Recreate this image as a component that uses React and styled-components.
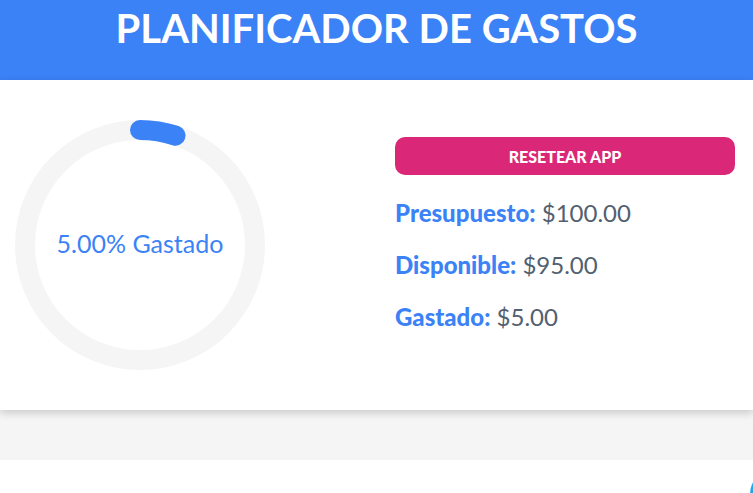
import React from "react";
import styled, { createGlobalStyle } from "styled-components";

const Global = createGlobalStyle`
  html, body { margin: 0; padding: 0; background: #ffffff; }
  body { font-family: Lato, "Noto Sans", sans-serif; overflow: hidden; }
  * { box-sizing: border-box; }
`;

const Header = styled.header`
  background: #3b82f6;
  height: 80px;
  padding-top: 4px;
`;

const Title = styled.h1`
  margin: 0;
  color: #ffffff;
  font-size: 40px;
  font-weight: 700;
  text-align: center;
  line-height: 1.2;
`;

const Card = styled.section`
  background: #ffffff;
  padding: 40px 18px 40px 15px;
  display: grid;
  grid-template-columns: 1fr 1fr;
  gap: 40px;
  box-shadow: 0 3px 8px rgba(0, 0, 0, 0.18);
  position: relative;
  z-index: 1;
`;

const ChartBox = styled.div`
  width: 250px;
  height: 250px;
  position: relative;
`;

const ChartLabel = styled.div`
  position: absolute;
  inset: 0;
  display: flex;
  align-items: center;
  justify-content: center;
  color: #3b82f6;
  font-size: 25px;
  padding-bottom: 4px;
`;

const Info = styled.div`
  display: flex;
  flex-direction: column;
  gap: 23px;
  padding-top: 17px;
`;

const ResetButton = styled.button`
  height: 38px;
  border: none;
  border-radius: 10px;
  background: #db2777;
  color: #ffffff;
  font-family: Lato, "Noto Sans", sans-serif;
  font-weight: 900;
  font-size: 16px;
  cursor: pointer;
`;

const Row = styled.p`
  margin: 0;
  font-size: 24px;
  line-height: 1.2;
  color: #526070;
  &:first-of-type { margin-top: 1px; }
`;

const Label = styled.span`
  color: #3b82f6;
  font-weight: 900;
`;

const Band = styled.div`
  height: 50px;
  background: #f5f5f5;
`;

const Lower = styled.div`
  height: 40px;
  background: #ffffff;
`;

const Fab = styled.div`
  position: fixed;
  left: 750px;
  top: 470px;
  width: 48px;
  height: 48px;
  border-radius: 50%;
  border-left: 3px solid #22a7e8;
`;

function Progress({ pct }) {
  const r = 115;
  const c = 2 * Math.PI * r;
  return (
    <svg width="250" height="250" viewBox="0 0 250 250">
      <circle cx="125" cy="125" r={r} fill="none" stroke="#f5f5f5" strokeWidth="20" />
      <circle
        cx="125"
        cy="125"
        r={r}
        fill="none"
        stroke="#3b82f6"
        strokeWidth="20"
        strokeLinecap="round"
        strokeDasharray={`${(c * pct) / 100} ${c}`}
        transform="rotate(-90 125 125)"
      />
    </svg>
  );
}

export default function App() {
  const pct = 5;
  return (
    <>
      <Global />
      <Header>
        <Title>PLANIFICADOR DE GASTOS</Title>
      </Header>
      <Card>
        <ChartBox>
          <Progress pct={pct} />
          <ChartLabel>5.00% Gastado</ChartLabel>
        </ChartBox>
        <Info>
          <ResetButton>RESETEAR APP</ResetButton>
          <Row><Label>Presupuesto:</Label> $100.00</Row>
          <Row><Label>Disponible:</Label> $95.00</Row>
          <Row><Label>Gastado:</Label> $5.00</Row>
        </Info>
      </Card>
      <Band />
      <Lower />
      <Fab />
    </>
  );
}
